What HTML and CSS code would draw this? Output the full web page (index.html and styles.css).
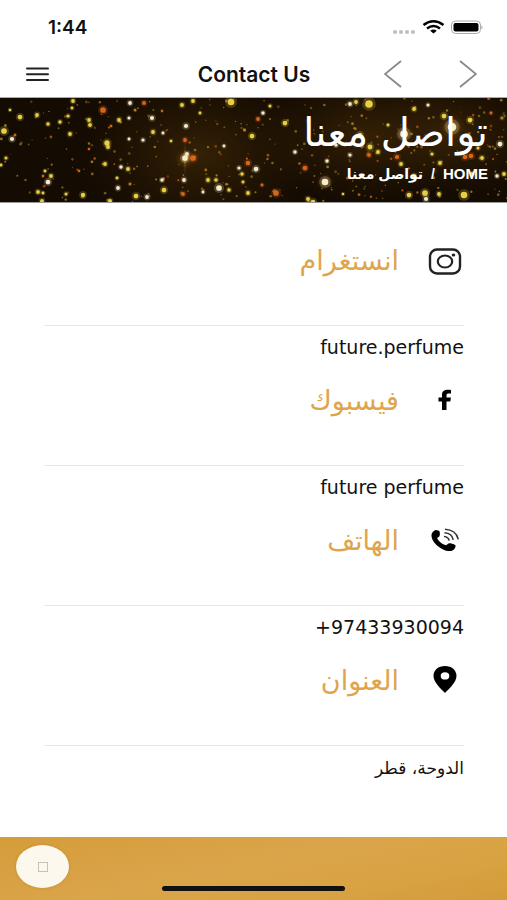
FILE: index.html
```html
<!DOCTYPE html>
<html lang="ar">
<head>
<meta charset="utf-8">
<meta name="viewport" content="width=device-width, initial-scale=1">
<title>Contact Us</title>
<link rel="stylesheet" href="styles.css">
</head>
<body>
<header>
  <div class="status">
    <span class="time">1:44</span>
    <svg class="status-icons" width="92" height="20" viewBox="0 0 92 20" aria-hidden="true">
      <g fill="#bdbdbd"><circle cx="4" cy="14" r="2"/><circle cx="10" cy="14" r="2"/><circle cx="16" cy="14" r="2"/><circle cx="22" cy="14" r="2"/></g>
      <g fill="none" stroke="#000" stroke-width="2.6"><path d="M32.500 7Q42.500-.5 52.500 7"/><path d="M36 10.500Q42.500 5.500 49 10.500"/></g>
      <path d="M39.200 12.800Q42.500 10 45.800 12.800L42.500 15.500Z"/>
      <rect x="60.500" y="3" width="29" height="12.500" rx="4" fill="#fff" stroke="#aaa"/>
      <rect x="62.500" y="5" width="25" height="8.500" rx="2"/><path d="M90.500 7.500q2 2 0 4" fill="#999"/>
    </svg>
  </div>
  <nav class="bar" aria-label="Main">
    <button class="icon-button" aria-label="Menu"><svg width="24" height="16" viewBox="0 0 24 16"><path d="M2 2.500h21M2 8.300h21M2 14h21" stroke="#222" stroke-width="2" stroke-linecap="round"/></svg></button>
    <span class="title">Contact Us</span>
    <div class="pager">
      <button class="icon-button" aria-label="Back"><svg width="18" height="28" viewBox="0 0 18 28"><path d="M17 1L1 14l16 13" fill="none" stroke="#888" stroke-width="1.800"/></svg></button>
      <button class="icon-button" aria-label="Forward"><svg width="18" height="28" viewBox="0 0 18 28"><path d="M1 1l16 13L1 27" fill="none" stroke="#888" stroke-width="1.800"/></svg></button>
    </div>
  </nav>
</header>
<section class="hero" dir="rtl">
  <svg class="sky" viewBox="0 0 507 104" preserveAspectRatio="xMidYMid slice" aria-hidden="true">
    <defs>
      <radialGradient id="glow"><stop offset="0" stop-color="#d8a030" stop-opacity=".7"/><stop offset=".5" stop-color="#a06a10" stop-opacity=".2"/><stop offset="1" stop-color="#7a4a00" stop-opacity="0"/></radialGradient>
      <radialGradient id="haze"><stop offset="0" stop-color="#4a3008" stop-opacity=".6"/><stop offset="1" stop-color="#3a2404" stop-opacity="0"/></radialGradient>
    </defs>
    <rect width="507" height="104" fill="#140b02"/>
    <ellipse cx="200" cy="56" rx="120" ry="80" fill="url(#haze)"/>
    <ellipse cx="365" cy="38" rx="110" ry="68" fill="url(#haze)"/>
    <ellipse cx="455" cy="38" rx="90" ry="60" fill="url(#haze)"/>
    <g fill="url(#glow)"><circle cx="185" cy="61" r="10"/><ellipse cx="185" cy="61" rx="2" ry="20"/><circle cx="325" cy="84" r="9"/><circle cx="452" cy="29" r="13"/><circle cx="404" cy="36" r="10"/></g>
    <g id="stars"></g>
  </svg>
  <h1>تواصل معنا</h1>
  <div class="crumbs"><a href="#">HOME</a><span>/</span><span>تواصل معنا</span></div>
</section>
<main dir="rtl">
  <section class="item">
    <div class="head">
      <svg class="icon" viewBox="0 0 38 38" aria-hidden="true"><g fill="none" stroke="#222"><rect x="4" y="7.500" width="30" height="24" rx="7" stroke-width="2.400"/><ellipse cx="19" cy="19.500" rx="7.200" ry="6" stroke-width="2.200"/></g><ellipse cx="27.500" cy="13" rx="1.800" ry="1.500" fill="#222"/></svg>
      <h2>انستغرام</h2>
    </div>
    <p><bdi>future.perfume</bdi></p>
  </section>
  <section class="item">
    <div class="head">
      <svg class="icon" viewBox="0 0 38 38" aria-hidden="true"><path d="M16 28V19.500h-3.500v-4H16V13c0-3.600 2.200-5.200 5.800-5.200 1.300 0 2.500.1 3.200.2v3.500h-2.200c-1.600 0-2.300.6-2.300 1.900v2.100h4.400l-.6 4h-3.800V28Z"/></svg>
      <h2>فيسبوك</h2>
    </div>
    <p><bdi>future perfume</bdi></p>
  </section>
  <section class="item">
    <div class="head">
      <svg class="icon" viewBox="0 0 38 38" aria-hidden="true"><path d="M10 8l3 .8c1 .5 1.200 4.700.3 5.600l-2.200 1.600c1.400 3.300 5.200 6.300 9 7.300l2.400-1.800c1.300-.8 6.400.9 7 2 .5 1.500-1.300 4.500-3.500 5.200C18 31 5 21 5.500 13c0-2 2.500-4.800 4.500-5Z"/><g fill="none" stroke="#333" stroke-width="1.600"><path d="M18 14.500c3 .3 4.800 1.800 5.200 4.200"/><path d="M18.500 10.800c5 .3 8 2.900 8.700 7"/><path d="M19 7.300c7 .3 12 4.200 13.300 10"/></g></svg>
      <h2>الهاتف</h2>
    </div>
    <p><bdi>+97433930094</bdi></p>
  </section>
  <section class="item">
    <div class="head">
      <svg class="icon" viewBox="0 0 38 38" aria-hidden="true"><path fill-rule="evenodd" d="M19 4c6.700 0 11.500 4.200 11.500 9.800C30.500 20.500 23 27 19 31 15 27 7.500 20.500 7.500 13.800 7.500 8.200 12.300 4 19 4Zm0 6.200a4.300 3.700 0 1 0 0 7.400 4.300 3.700 0 1 0 0-7.400Z"/></svg>
      <h2>العنوان</h2>
    </div>
    <p>الدوحة، قطر</p>
  </section>
</main>
<footer>
  <button class="round" aria-label="Open"><span class="square"></span></button>
  <span class="home-line"></span>
</footer>
<script src="stars.js"></script>
</body>
</html>
```
FILE: styles.css
```css
* { box-sizing: border-box; }
body {
  margin: 0;
  min-height: 100vh;
  display: flex;
  flex-direction: column;
  background: #fff;
  color: #111;
  font-family: "DejaVu Sans", sans-serif;
}
h1, h2, p { margin: 0; font-weight: 400; }
button { border: 0; padding: 0; background: none; }
header { font-family: Inter, "Liberation Sans", sans-serif; border-bottom: 1px solid #aaa; }
.status {
  height: 51px;
  padding: 4px 24px 0 48px;
  display: flex;
  align-items: center;
  justify-content: space-between;
}
.time { font-size: 19px; font-weight: 600; }
.bar {
  height: 46px;
  padding: 0 30px 0 25px;
  display: grid;
  grid-template-columns: 1fr auto 1fr;
  align-items: center;
}
.title { padding-left: 6px; font-size: 21px; font-weight: 600; }
.icon-button { display: flex; justify-self: start; }
.pager { display: flex; justify-content: flex-end; gap: 57px; }
.hero {
  position: relative;
  height: 105px;
  padding: 10px 19px 0;
  color: #fff;
  overflow: hidden;
  border-bottom: 1px solid #999;
}
.sky { position: absolute; inset: 0; width: 100%; height: 100%; }
.hero h1, .crumbs { position: relative; }
.hero h1 { font-size: 40px; line-height: 48px; }
.crumbs {
  display: flex;
  gap: 8px;
  margin-top: 8px;
  font: bold 14px/20px "Liberation Sans", "DejaVu Sans", sans-serif;
}
.crumbs a { color: inherit; text-decoration: none; font-size: 15px; }
main { flex: 1; padding: 28px 43px 0 44px; }
.item { padding-bottom: 9px; }
.head {
  display: flex;
  align-items: center;
  gap: 27px;
  height: 95px;
  padding-bottom: 34px;
  border-bottom: 1px solid #e8e8e8;
}
.icon { width: 38px; height: 38px; }
.head h2 { font-size: 27px; line-height: 40px; color: #dfa54c; }
.item p { padding-top: 8px; font-size: 17px; line-height: 28px; }
.item bdi { font-size: 19px; line-height: 20px; }
footer {
  position: relative;
  height: 63px;
  padding: 8px 16px;
  background: linear-gradient(168deg, #d59c39, #daa44a 45%, #d9a344 70%, #d49b38);
}
.round {
  width: 53px;
  height: 43px;
  display: flex;
  align-items: center;
  justify-content: center;
  border-radius: 50%;
  background: #fdf8ee;
  box-shadow: 0 0 3px #b98a35;
}
.square { width: 10px; height: 10px; border: 1px solid #c8c2b6; }
.home-line {
  position: absolute;
  left: 50%;
  bottom: 9px;
  width: 36%;
  height: 5px;
  margin-left: -18%;
  border-radius: 3px;
  background: #111;
}
```
FILE: stars.js
```js
const colors = { y: '#f0d848', w: '#fff3d0', o: '#e06a18', g: '#b08a28' };
// x, y, radius, colour
const bright = `
73 3 2 y,130 5 2 w,144 5 2 o,193 3 2 y,231 4 3.5 y,103 12 3 o,20 19 2.5 y,37 17 2 y,72 10 1.500 y,152 20 2.200 w,
4 33 3 y,12 41 2.200 w,60 24 1.800 y,48 26 1.800 y,89 22 2 y,90 27 2 y,70 36 2 y,119 22 2 y,129 20 1.600 w,135 12 1.300 g,
107 45 2.800 y,108 49 2 y,111 28 1.300 o,129 41 1.500 w,143 42 1.700 w,153 34 2 y,163 35 1.500 w,186 28 2.200 w,171 43 1.400 y,185 42 2 o,
185 60 3 w,193 60 3 o,187 56 2 w,105 66 2 y,121 69 1.800 w,128 71 2 y,51 78 2 y,48 84 2.500 w,45 73 1.500 y,43 78 1.300 o,
79 73 1.200 o,89 51 1.200 o,6 60 1.600 y,1 67 1.500 y,38 94 2 y,43 95 1.500 y,66 96 1.600 y,83 97 2.300 y,136 98 2.500 y,147 99 2 w,
118 90 2 w,117 80 1.500 y,130 86 1.400 g,162 82 1.800 w,184 82 2 w,164 92 2.500 y,183 96 2 o,208 82 2 y,216 82 1.800 y,219 90 3 w,
229 92 1.800 y,248 65 2.400 o,239 70 1.700 w,242 76 1.800 y,248 95 2 y,243 84 1.500 y,224 48 1.500 w,252 38 2.500 y,200 15 1.500 y,182 7 2 y,
203 94 1.500 w,42 103 2 y,110 103 2 y,68 18 1.700 y,162 13 1.200 o,10 12 1.400 y,15 37 1.300 o,
369 6 4 y,350 6 2 w,356 4 2 y,285 25 2.500 y,263 15 1.800 w,258 21 2 o,414 11 2 y,428 7 1.600 w,444 18 2.500 y,452 29 4.500 w,
470 22 2.500 y,500 46 2.500 w,404 36 4 w,388 27 1.500 y,360 37 2.500 y,370 49 2.600 y,369 57 2 o,378 54 2 y,336 47 1.800 w,350 57 1.700 w,
295 54 1.800 w,305 70 2.500 o,327 63 1.800 w,325 84 3.500 w,276 95 3 o,308 101 2 y,313 104 2.500 y,256 71 2.500 w,262 87 1.500 o,343 96 1.300 y,
409 97 2.500 y,425 95 3 y,426 101 2.200 w,439 96 2 y,464 97 3.500 y,465 59 2.400 o,471 58 2.400 o,482 60 2 y,397 59 2.200 o,401 66 2 y,
440 65 2 y,432 56 1.600 y,414 78 2 y,497 78 1.800 w,504 76 2 y,472 76 2 y,478 50 1.600 y,491 15 1.500 o,502 20 1.600 g,270 8 1.600 y`;
let seed = 41;
const random = () => (seed = (seed * 16807) % 2147483647) / 2147483647;
const group = document.getElementById('stars');
function star(x, y, r, fill, opacity) {
  const c = document.createElementNS('http://www.w3.org/2000/svg', 'circle');
  Object.entries({ cx: x, cy: y, r, fill, opacity }).forEach(([k, v]) => c.setAttribute(k, v));
  group.append(c);
}
for (let i = 0; i < 330; i++) {
  const x = 507 * Math.pow(random(), 0.75);
  star(x, random() * 104, 0.6 + random() * 0.9, random() < 0.2 ? colors.o : colors.g, 0.35 + random() * 0.5);
}
bright.split(',').forEach(entry => {
  const [x, y, r, c] = entry.trim().split(' ');
  star(x, y, r * 1.7, colors[c], 0.2);
  star(x, y, r * 0.95, colors[c], 0.95);
});
```
